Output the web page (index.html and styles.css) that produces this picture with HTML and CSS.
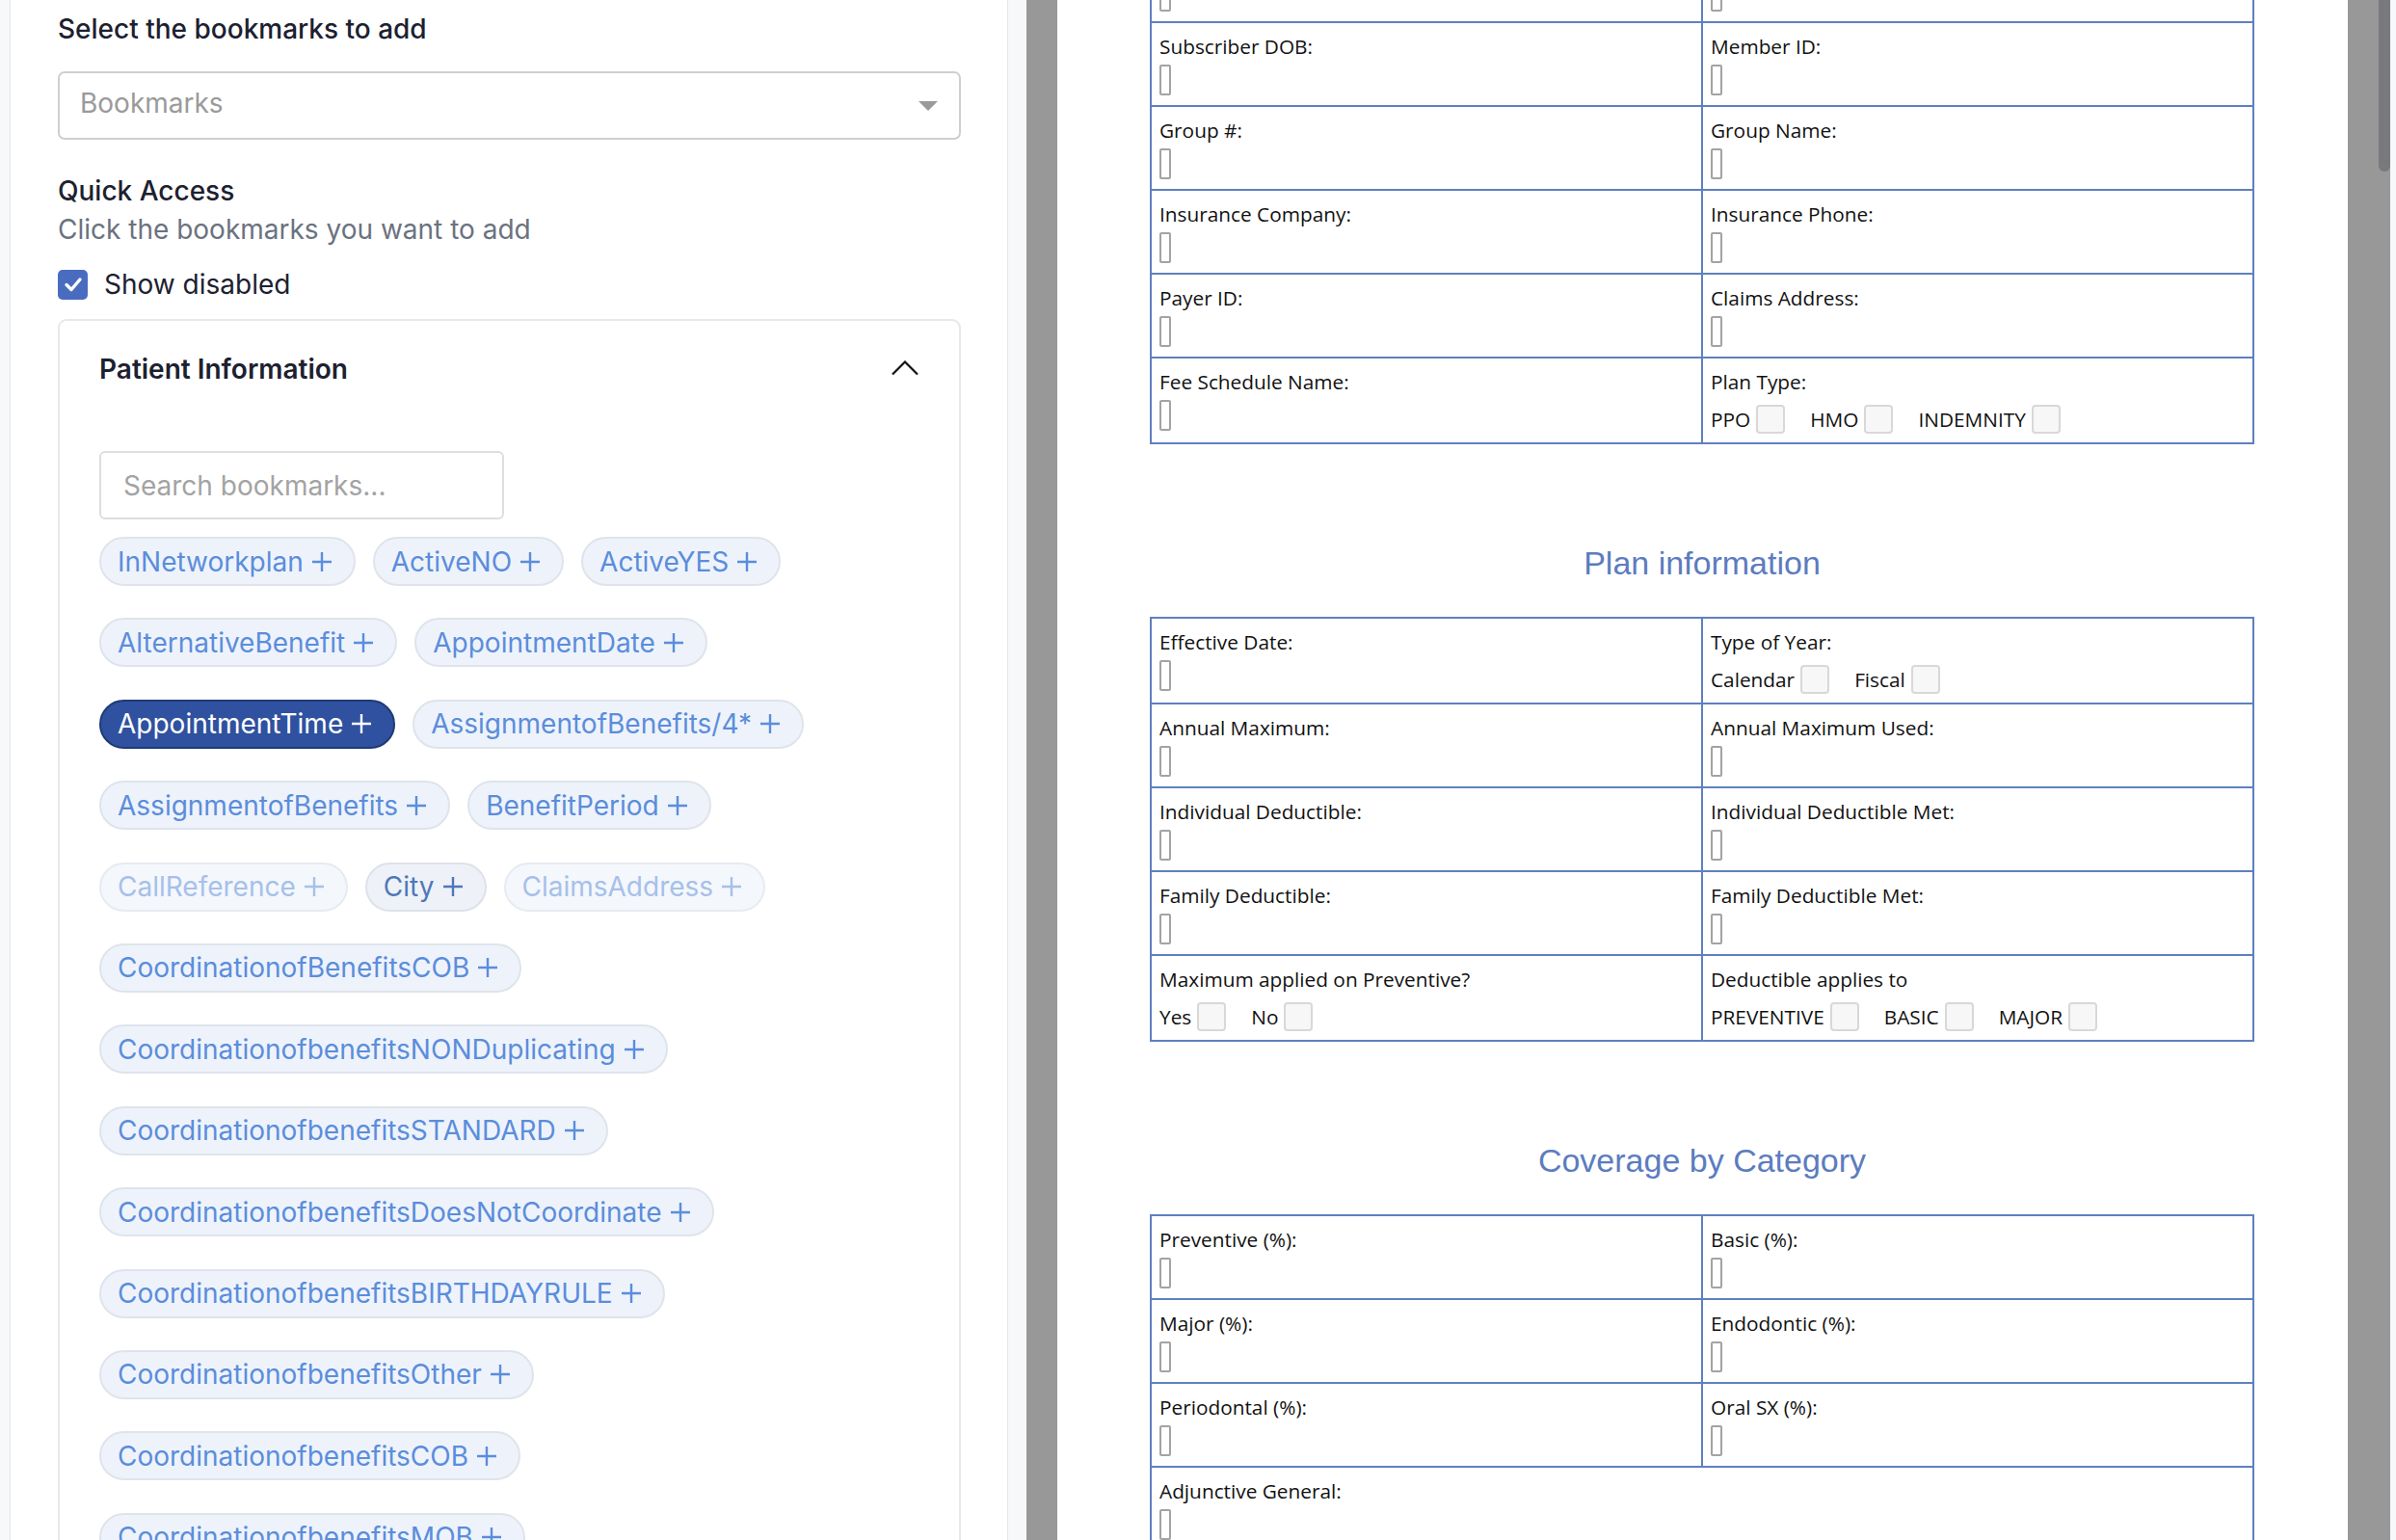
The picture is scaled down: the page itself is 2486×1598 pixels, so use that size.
FILE: index.html
```html
<!DOCTYPE html>
<html lang="en">
<head>
<meta charset="utf-8">
<title>Bookmarks</title>
<link rel="stylesheet" href="styles.css">
</head>
<body>
<div class="app">
  <aside class="panel">
    <h2 class="title">Select the bookmarks to add</h2>
    <div class="select"><span class="select-text">Bookmarks</span><span class="caret"></span></div>
    <h3 class="qa-title">Quick Access</h3>
    <p class="qa-sub">Click the bookmarks you want to add</p>
    <label class="show">
      <span class="cbox"><svg width="22" height="22" viewBox="0 0 22 22"><polyline points="4,11.5 9,16.5 18,6" fill="none" stroke="#fff" stroke-width="3.4" stroke-linecap="round" stroke-linejoin="round"/></svg></span>
      <span>Show disabled</span>
    </label>
    <section class="card">
      <div class="card-head">
        <span>Patient Information</span>
        <svg class="chev" width="28" height="16" viewBox="0 0 28 16"><polyline points="1,14.5 14,1.5 27,14.5" fill="none" stroke="#111" stroke-width="2.2"/></svg>
      </div>
      <div class="card-body">
        <div class="search">Search bookmarks...</div>
        <div class="chips">
          <span class="chip">InNetworkplan<svg class="plus" viewBox="0 0 22 22"><path d="M11 1v20M1 11h20"/></svg></span>
          <span class="chip">ActiveNO<svg class="plus" viewBox="0 0 22 22"><path d="M11 1v20M1 11h20"/></svg></span>
          <span class="chip">ActiveYES<svg class="plus" viewBox="0 0 22 22"><path d="M11 1v20M1 11h20"/></svg></span>
          <span class="chip">AlternativeBenefit<svg class="plus" viewBox="0 0 22 22"><path d="M11 1v20M1 11h20"/></svg></span>
          <span class="chip">AppointmentDate<svg class="plus" viewBox="0 0 22 22"><path d="M11 1v20M1 11h20"/></svg></span>
          <span class="chip active">AppointmentTime<svg class="plus" viewBox="0 0 22 22"><path d="M11 1v20M1 11h20"/></svg></span>
          <span class="chip">AssignmentofBenefits/4*<svg class="plus" viewBox="0 0 22 22"><path d="M11 1v20M1 11h20"/></svg></span>
          <span class="chip">AssignmentofBenefits<svg class="plus" viewBox="0 0 22 22"><path d="M11 1v20M1 11h20"/></svg></span>
          <span class="chip">BenefitPeriod<svg class="plus" viewBox="0 0 22 22"><path d="M11 1v20M1 11h20"/></svg></span>
          <span class="chip disabled">CallReference<svg class="plus" viewBox="0 0 22 22"><path d="M11 1v20M1 11h20"/></svg></span>
          <span class="chip hover">City<svg class="plus" viewBox="0 0 22 22"><path d="M11 1v20M1 11h20"/></svg></span>
          <span class="chip disabled">ClaimsAddress<svg class="plus" viewBox="0 0 22 22"><path d="M11 1v20M1 11h20"/></svg></span>
          <span class="chip">CoordinationofBenefitsCOB<svg class="plus" viewBox="0 0 22 22"><path d="M11 1v20M1 11h20"/></svg></span>
          <span class="chip">CoordinationofbenefitsNONDuplicating<svg class="plus" viewBox="0 0 22 22"><path d="M11 1v20M1 11h20"/></svg></span>
          <span class="chip">CoordinationofbenefitsSTANDARD<svg class="plus" viewBox="0 0 22 22"><path d="M11 1v20M1 11h20"/></svg></span>
          <span class="chip">CoordinationofbenefitsDoesNotCoordinate<svg class="plus" viewBox="0 0 22 22"><path d="M11 1v20M1 11h20"/></svg></span>
          <span class="chip">CoordinationofbenefitsBIRTHDAYRULE<svg class="plus" viewBox="0 0 22 22"><path d="M11 1v20M1 11h20"/></svg></span>
          <span class="chip">CoordinationofbenefitsOther<svg class="plus" viewBox="0 0 22 22"><path d="M11 1v20M1 11h20"/></svg></span>
          <span class="chip">CoordinationofbenefitsCOB<svg class="plus" viewBox="0 0 22 22"><path d="M11 1v20M1 11h20"/></svg></span>
          <span class="chip">CoordinationofbenefitsMOB<svg class="plus" viewBox="0 0 22 22"><path d="M11 1v20M1 11h20"/></svg></span>
        </div>
      </div>
    </section>
  </aside>

  <main class="viewer">
    <div class="pages">
      <div class="page">
        <div class="doc">
          <table class="form">
            <colgroup><col class="c1"><col class="c2"></colgroup>
            <tr>
              <td><div class="lbl"></div><div class="fld"></div></td>
              <td><div class="lbl"></div><div class="fld"></div></td>
            </tr>
            <tr>
              <td><div class="lbl">Subscriber DOB:</div><div class="fld"></div></td>
              <td><div class="lbl">Member ID:</div><div class="fld"></div></td>
            </tr>
            <tr>
              <td><div class="lbl">Group #:</div><div class="fld"></div></td>
              <td><div class="lbl">Group Name:</div><div class="fld"></div></td>
            </tr>
            <tr>
              <td><div class="lbl">Insurance Company:</div><div class="fld"></div></td>
              <td><div class="lbl">Insurance Phone:</div><div class="fld"></div></td>
            </tr>
            <tr>
              <td><div class="lbl">Payer ID:</div><div class="fld"></div></td>
              <td><div class="lbl">Claims Address:</div><div class="fld"></div></td>
            </tr>
            <tr>
              <td><div class="lbl">Fee Schedule Name:</div><div class="fld"></div></td>
              <td class="chk"><div class="lbl">Plan Type:</div>
                <div class="opts">
                  <span class="opt">PPO<span class="box"></span></span>
                  <span class="opt">HMO<span class="box"></span></span>
                  <span class="opt">INDEMNITY<span class="box"></span></span>
                </div>
              </td>
            </tr>
          </table>

          <h2 class="sec">Plan information</h2>

          <table class="form">
            <colgroup><col class="c1"><col class="c2"></colgroup>
            <tr>
              <td><div class="lbl">Effective Date:</div><div class="fld"></div></td>
              <td class="chk"><div class="lbl">Type of Year:</div>
                <div class="opts">
                  <span class="opt">Calendar<span class="box"></span></span>
                  <span class="opt">Fiscal<span class="box"></span></span>
                </div>
              </td>
            </tr>
            <tr>
              <td><div class="lbl">Annual Maximum:</div><div class="fld"></div></td>
              <td><div class="lbl">Annual Maximum Used:</div><div class="fld"></div></td>
            </tr>
            <tr>
              <td><div class="lbl">Individual Deductible:</div><div class="fld"></div></td>
              <td><div class="lbl">Individual Deductible Met:</div><div class="fld"></div></td>
            </tr>
            <tr>
              <td><div class="lbl">Family Deductible:</div><div class="fld"></div></td>
              <td><div class="lbl">Family Deductible Met:</div><div class="fld"></div></td>
            </tr>
            <tr>
              <td class="chk"><div class="lbl">Maximum applied on Preventive?</div>
                <div class="opts">
                  <span class="opt">Yes<span class="box"></span></span>
                  <span class="opt">No<span class="box"></span></span>
                </div>
              </td>
              <td class="chk"><div class="lbl">Deductible applies to</div>
                <div class="opts">
                  <span class="opt">PREVENTIVE<span class="box"></span></span>
                  <span class="opt">BASIC<span class="box"></span></span>
                  <span class="opt">MAJOR<span class="box"></span></span>
                </div>
              </td>
            </tr>
          </table>

          <h2 class="sec">Coverage by Category</h2>

          <table class="form">
            <colgroup><col class="c1"><col class="c2"></colgroup>
            <tr>
              <td><div class="lbl">Preventive (%):</div><div class="fld"></div></td>
              <td><div class="lbl">Basic (%):</div><div class="fld"></div></td>
            </tr>
            <tr>
              <td><div class="lbl">Major (%):</div><div class="fld"></div></td>
              <td><div class="lbl">Endodontic (%):</div><div class="fld"></div></td>
            </tr>
            <tr>
              <td><div class="lbl">Periodontal (%):</div><div class="fld"></div></td>
              <td><div class="lbl">Oral SX (%):</div><div class="fld"></div></td>
            </tr>
            <tr>
              <td colspan="2"><div class="lbl">Adjunctive General:</div><div class="fld"></div></td>
            </tr>
          </table>
        </div>
      </div>
    </div>
    <div class="scroll"><div class="thumb"></div></div>
  </main>
</div>
</body>
</html>
```

FILE: styles.css
```css
* { box-sizing: border-box; }
html, body { margin: 0; padding: 0; height: 100%; }
body {
  background: #f7f8fa;
  font-family: Inter, "Noto Sans", sans-serif;
  overflow: hidden;
}
.app { display: flex; height: 1598px; overflow: hidden; }

/* ---------- left panel ---------- */
.panel {
  flex: 0 0 1036px;
  margin-left: 10px;
  background: #fff;
  border-left: 1px solid #e4e6ea;
  border-right: 1px solid #e4e6ea;
  padding: 10px 48px 0 49px;
  overflow: hidden;
}
.title {
  margin: 0;
  font-size: 28px;
  font-weight: 500;
  line-height: 40px;
  color: #1c2130;
}
.select {
  margin-top: 24px;
  height: 71px;
  border: 2px solid #cfcfcf;
  border-radius: 7px;
  display: flex;
  align-items: center;
  justify-content: space-between;
  padding: 0 22px 0 21px;
  font-size: 28px;
  color: #9a9a9a;
}
.select-text { margin-top: -5px; }
.caret {
  width: 0;
  height: 0;
  border-left: 10px solid transparent;
  border-right: 10px solid transparent;
  border-top: 10px solid #9a9a9a;
}
.qa-title {
  margin: 33px 0 0;
  font-size: 28px;
  font-weight: 500;
  line-height: 40px;
  color: #1c2130;
}
.qa-sub {
  margin: 0;
  font-size: 28px;
  line-height: 40px;
  color: #6b7280;
}
.show {
  margin-top: 17px;
  height: 40px;
  display: flex;
  align-items: center;
  gap: 17px;
  font-size: 28px;
  color: #1c2130;
}
.cbox {
  width: 31px;
  height: 31px;
  border-radius: 5px;
  background: #4a6cc0;
  display: flex;
  align-items: center;
  justify-content: center;
}
.card {
  margin-top: 16px;
  border: 2px solid #e8e8e8;
  border-radius: 9px;
  min-height: 1400px;
}
.card-head {
  display: flex;
  align-items: center;
  justify-content: space-between;
  padding: 30px 42px 0 41px;
  height: 70px;
  font-size: 28px;
  font-weight: 600;
  color: #1c2130;
}
.chev { margin-top: -2px; }
.card-body { padding: 65px 41px 0; }
.search {
  width: 420px;
  height: 71px;
  border: 2px solid #dedede;
  border-radius: 6px;
  padding-left: 23px;
  display: flex;
  align-items: center;
  font-size: 28px;
  color: #a3a3a3;
}
.chips {
  margin-top: 18px;
  display: flex;
  flex-wrap: wrap;
  gap: 33.4px 18px;
}
.chip {
  height: 51px;
  border: 2px solid #dfe4eb;
  border-radius: 26px;
  background: #eef3fb;
  color: #5b8ddb;
  display: inline-flex;
  align-items: center;
  gap: 8px;
  padding: 0 22px 0 17px;
  font-size: 28px;
  white-space: nowrap;
}
.plus {
  width: 22px;
  height: 22px;
  fill: none;
  stroke: currentColor;
  stroke-width: 2.4;
}
.chip.active {
  background: #2f519f;
  border-color: #1f3a78;
  color: #fff;
}
.chip.disabled {
  background: #f4f7fc;
  border-color: #e7ebf0;
  color: #a6c0ea;
}
.chip.hover {
  background: #eef2f8;
  border-color: #dde2e9;
  color: #4f78b8;
}

/* ---------- document viewer ---------- */
.viewer {
  flex: 0 0 1415px;
  margin-left: 19px;
  background: #989898;
  display: flex;
}
.pages {
  flex: 1;
  padding: 0 32px;
  overflow: hidden;
}
.page {
  background: #fff;
  height: 100%;
  padding: 0 97px 0 96px;
  overflow: hidden;
}
.doc { margin-top: -65px; }
.scroll { width: 12px; flex: 0 0 12px; }
.thumb {
  height: 178px;
  background: #77797c;
  border-radius: 0 0 6px 6px;
}

.form {
  width: 100%;
  border-collapse: collapse;
  table-layout: fixed;
  font-family: "Open Sans", "Liberation Sans", sans-serif;
  font-size: 20.8px;
  color: #111;
}
.c1 { width: 572px; }
.form td {
  border: 2px solid #5f80bf;
  padding: 10px 8px 10px 8px;
  vertical-align: top;
}
.form td.chk { padding-bottom: 9px; }
.lbl {
  height: 28px;
  line-height: 28px;
  white-space: nowrap;
}
.fld {
  width: 12px;
  height: 32px;
  margin-top: 5px;
  border: 2px solid #a3a3a3;
  border-radius: 2px;
}
.opts {
  display: flex;
  align-items: center;
  gap: 26px;
  height: 30px;
  margin-top: 10px;
}
.opt {
  display: flex;
  align-items: center;
  gap: 6px;
}
.box {
  width: 30px;
  height: 30px;
  border: 2px solid #d8d8d8;
  border-radius: 4px;
  background: #f7f7f7;
}
.sec {
  margin: 103px 0 36px;
  text-align: center;
  font-family: "Liberation Sans", Arial, sans-serif;
  font-size: 34px;
  font-weight: 400;
  line-height: 40px;
  color: #5c7cbf;
}
```
